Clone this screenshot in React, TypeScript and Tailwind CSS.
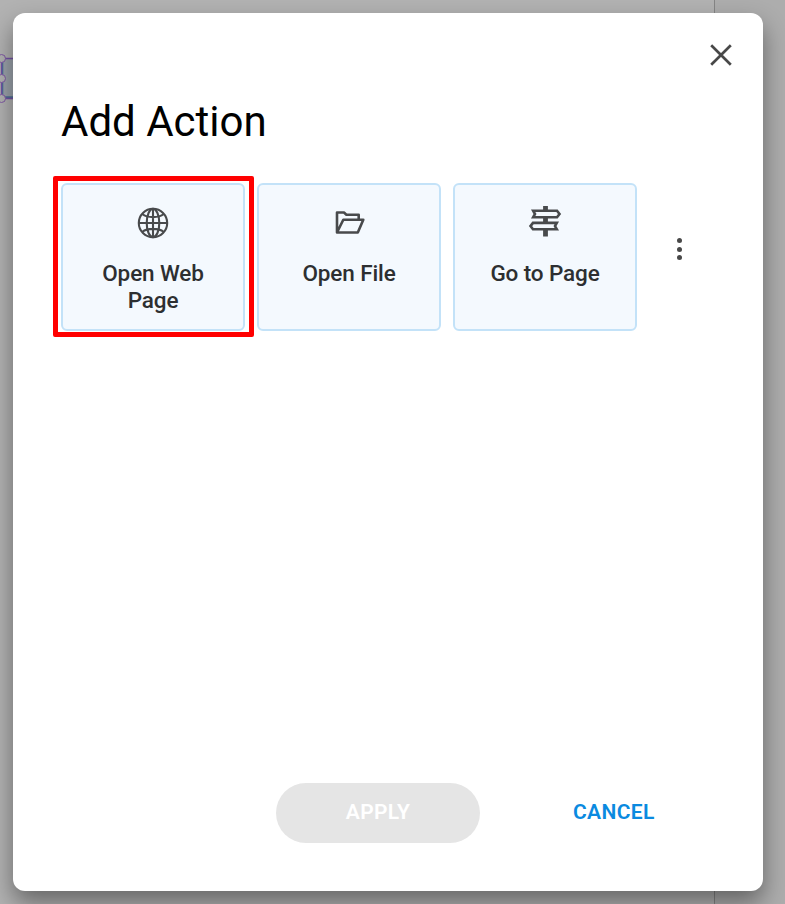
import React from 'react';

const GlobeIcon = () => (
  <svg width="32" height="32" viewBox="0 0 32 32" fill="none" stroke="#484a4c" strokeWidth="2.1">
    <circle cx="16" cy="16" r="14.2" />
    <ellipse cx="16" cy="16" rx="6.3" ry="14.2" />
    <path d="M16 1.8v28.4M1.8 16h28.4M5.2 7c2.8 2.2 6.6 3.1 10.8 3.1S24 9.2 26.8 7M5.2 25c2.8-2.2 6.6-3.1 10.8-3.1s8 .9 10.8 3.1" />
  </svg>
);

const FolderIcon = () => (
  <svg width="32" height="32" viewBox="0 0 32 32" fill="none" stroke="#484a4c" strokeWidth="2.6" strokeLinejoin="round">
    <path d="M4 25.5V5.5h7l2.4 2.2h12.3v5M4 25.5l6.3-12.8h20l-5.5 12.8z" />
  </svg>
);

const SignpostIcon = () => (
  <svg className="-mt-px mb-px" width="34" height="32" viewBox="0 0 34 32" fill="none" stroke="#484a4c" strokeWidth="2.6">
    <path d="M17.5 0v4.5M17.5 12v4M17.5 24v6.5" strokeWidth="4.8" />
    <path d="M5.2 4.8h23.8l2.5 3.200-2.500 3.200H5.200L7 8z" />
    <path d="M28.800 16.900H5l-2.500 3.200L5 23.300h23.800L27 20.100z" />
  </svg>
);

const actions = [
  { label: 'Open Web Page', icon: GlobeIcon, highlighted: true },
  { label: 'Open File', icon: FolderIcon, highlighted: false },
  { label: 'Go to Page', icon: SignpostIcon, highlighted: false },
];

const ActionCard = ({ label, icon: Icon, highlighted }: any) => (
  <div className="relative">
    <button className="flex h-[148px] w-[184px] flex-col items-center rounded-[6px] border-2 border-[#c3e2f8] bg-[#f4f9fe] px-6 pt-[22px] text-[#2d2f31]">
      <Icon />
      <span className="mt-[20.5px] text-[22.5px] leading-[27px] font-medium tracking-[-0.12px]">{label}</span>
    </button>
    {highlighted && (
      <div className="pointer-events-none absolute -top-[7px] -left-[8px] h-[161px] w-[201px] rounded-[2px] border-[5px] border-[#ff0000]" />
    )}
  </div>
);

// Page editor that sits dimmed behind the dialog
const Backdrop = () => (
  <div className="absolute inset-0 flex">
    <div className="w-[715px] border-r border-[#858585] bg-[#b2b2b2]" />
    <div className="flex-1 bg-[#adadad]" />
    <svg className="absolute top-[50px] left-0" width="20" height="56" viewBox="0 0 20 56" fill="none">
      <path d="M2 8.5h18v39H2z" fill="#9ba2aa" />
      <path d="M2.3 8v39.3H20" stroke="#4d7097" strokeWidth="2" />
      <path d="M20 8.5H1.5v40H20" stroke="#7351a5" strokeWidth="1.3" />
      <circle cx="1.5" cy="8.5" r="4" fill="#b2b2b2" stroke="#8058a5" />
      <circle cx="1.5" cy="28.5" r="4" fill="#b2b2b2" stroke="#8058a5" />
      <circle cx="1.5" cy="48.5" r="4" fill="#b2b2b2" stroke="#8058a5" />
    </svg>
  </div>
);

export default function App() {
  return (
    <div className="relative h-[904px] w-[785px] overflow-hidden p-[13px] font-['Roboto',sans-serif]">
      <Backdrop />

      <div className="relative flex h-[878px] w-[750px] flex-col rounded-[12px] bg-white shadow-[0_12px_24px_rgba(0,0,0,0.42)]">
        <div className="flex justify-end pt-[31px] pr-[31px]">
          <button aria-label="Close">
            <svg className="block" width="22" height="22" viewBox="0 0 22 22" fill="none" stroke="#484848" strokeWidth="2.7">
              <path d="m1.2 1.2 19.6 19.6M20.8 1.2 1.2 20.8" />
            </svg>
          </button>
        </div>

        <h1 className="mt-[32px] pl-[48px] text-[42px] leading-[48px] text-black">Add Action</h1>

        <div className="mt-[37px] flex items-center pl-[48px]">
          <div className="flex gap-3">
            {actions.map((action) => (
              <ActionCard key={action.label} {...action} />
            ))}
          </div>
          <button className="ml-[40px] flex flex-col gap-[3.5px] pb-[16px]" aria-label="More actions">
            <span className="h-[5px] w-[5px] rounded-full bg-[#484848]" />
            <span className="h-[5px] w-[5px] rounded-full bg-[#484848]" />
            <span className="h-[5px] w-[5px] rounded-full bg-[#484848]" />
          </button>
        </div>

        <div className="mt-auto mb-[48px] flex items-center pl-[263px]">
          <button className="h-[60px] w-[204px] rounded-full bg-[#e5e5e5] pb-px text-[21px] font-semibold tracking-[0.35px] text-white">APPLY</button>
          <button className="ml-[93px] pb-px text-[21px] font-semibold tracking-[0.35px] text-[#0a8ae0]">CANCEL</button>
        </div>
      </div>
    </div>
  );
}
